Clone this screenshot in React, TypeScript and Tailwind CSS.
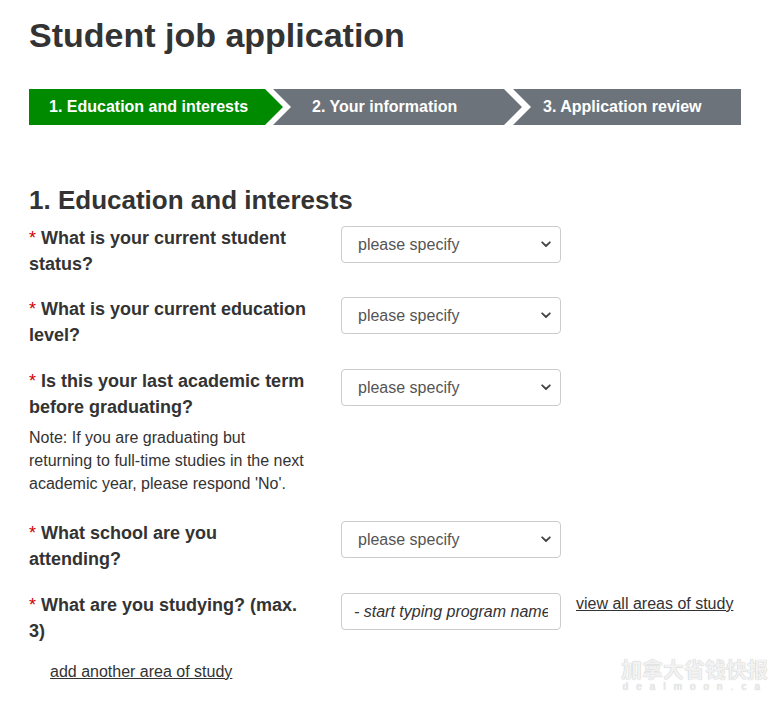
import React from 'react';

const font = { fontFamily: '"Liberation Sans", Arial, sans-serif' };

const Req = () => (
  <>
    <span className="text-[#c00] font-normal">*</span>{' '}
  </>
);

const Select = () => (
  <div className="relative w-[220px] h-[37px] mt-[1px]">
    <select className="appearance-none w-full h-full border border-[#ccc] rounded-[4px] bg-white pl-[16px] pr-8 text-[16px] text-[#555] outline-none">
      <option>please specify</option>
    </select>
    <svg className="absolute right-[10px] top-[15px] w-[10px] h-[7px] pointer-events-none" viewBox="0 0 10 7" fill="none">
      <path d="M1.2 1.3 L5 5 L8.8 1.3" stroke="#444" strokeWidth="1.8" strokeLinecap="round" strokeLinejoin="round" />
    </svg>
  </div>
);

const labelCls = 'block w-[280px] text-[18px] font-bold leading-[26px]';

const App: React.FC = () => {
  return (
    <div style={font} className="relative min-h-[703px] bg-white text-[#333] px-[29px] pt-[12px] overflow-hidden">
      {/* Title */}
      <h1 className="text-[34px] font-bold leading-[46px]">Student job application</h1>

      {/* Steps */}
      <div className="flex mt-[31px] h-[36px] w-[712px] text-white text-[16px] font-bold">
        <div className="flex items-center w-[254px] pl-[20px] bg-[#008a00] [clip-path:polygon(0_0,calc(100%-18px)_0,100%_50%,calc(100%-18px)_100%,0_100%)]">
          1. Education and interests
        </div>
        <div className="flex items-center w-[249px] -ml-[10px] pl-[39px] bg-[#6d737b] [clip-path:polygon(0_0,calc(100%-18px)_0,100%_50%,calc(100%-18px)_100%,0_100%,18px_50%)]">
          2. Your information
        </div>
        <div className="flex items-center flex-1 -ml-[9px] pl-[30px] bg-[#6d737b] [clip-path:polygon(0_0,100%_0,100%_100%,0_100%,18px_50%)]">
          3. Application review
        </div>
      </div>

      {/* Section */}
      <h2 className="mt-[59px] text-[26px] font-bold leading-[32px]">1. Education and interests</h2>

      <div className="mt-[9px] flex flex-col">
        <div className="flex items-start">
          <div className="w-[312px]">
            <label className={labelCls}><Req />What is your current student status?</label>
          </div>
          <Select />
        </div>

        <div className="flex items-start mt-[19px]">
          <div className="w-[312px]">
            <label className={labelCls}><Req />What is your current education level?</label>
          </div>
          <Select />
        </div>

        <div className="flex items-start mt-[20px]">
          <div className="w-[312px]">
            <label className={labelCls}><Req />Is this your last academic term before graduating?</label>
            <p className="mt-[6px] text-[16px] leading-[23px] w-[280px]">
              Note: If you are graduating but returning to full-time studies in the next academic year, please respond 'No'.
            </p>
          </div>
          <Select />
        </div>

        <div className="flex items-start mt-[25px]">
          <div className="w-[312px]">
            <label className={labelCls}><Req />What school are you attending?</label>
          </div>
          <Select />
        </div>

        <div className="flex items-start mt-[20px]">
          <div className="w-[312px]">
            <label className={labelCls}><Req />What are you studying? (max. 3)</label>
          </div>
          <input
            type="text"
            placeholder="- start typing program name"
            className="mt-[1px] w-[220px] h-[37px] border border-[#ccc] rounded-[4px] px-[12px] text-[16px] italic text-[#333] placeholder:text-[#333] outline-none"
          />
          <a href="#" className="ml-[15px] mt-[2px] text-[16px] leading-[20px] text-[#333] underline">view all areas of study</a>
        </div>

        <a href="#" className="ml-[21px] mt-[18px] self-start text-[16px] leading-[20px] text-[#333] underline">add another area of study</a>
      </div>

      {/* Watermark */}
      <div className="absolute right-[2px] bottom-[10px] flex flex-col items-end pointer-events-none select-none">
        <span className="text-[21px] leading-[25px] font-bold text-[#f2f2f2] [text-shadow:0_0_1px_#b0b0b0]" style={{ fontFamily: '"Noto Sans CJK SC", sans-serif' }}>加拿大省钱快报</span>
        <span className="text-[10px] leading-[12px] tracking-[8px] text-[#f0f0f0] [text-shadow:0_0_1px_#b0b0b0]" style={font}>dealmoon.ca</span>
      </div>
    </div>
  );
};

export default App;
